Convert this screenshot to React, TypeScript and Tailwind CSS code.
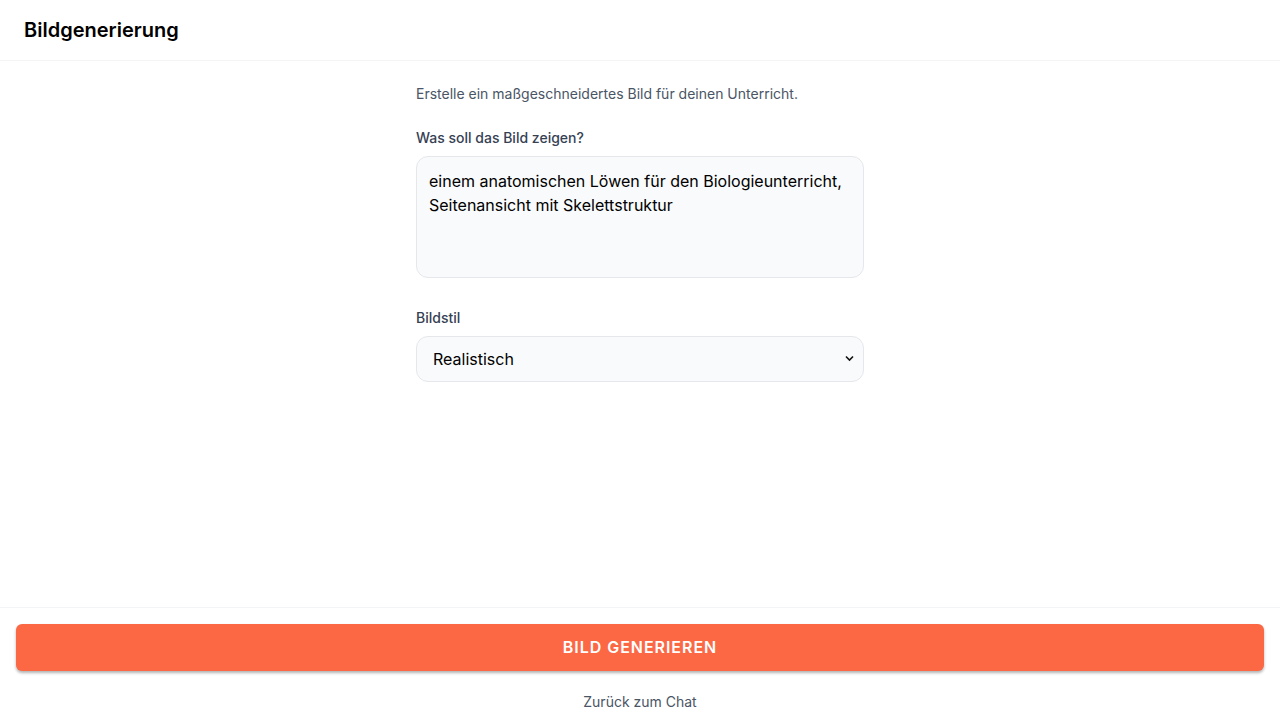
import React from "react";

export default function App() {
  return (
    <div
      className="flex h-[720px] w-[1280px] flex-col bg-white"
      style={{ fontFamily: "Inter, 'Noto Sans', sans-serif" }}
    >
      <header className="flex h-[61px] shrink-0 items-center border-b border-gray-100 px-6">
        <h1 className="text-xl font-semibold text-black">Bildgenerierung</h1>
      </header>
      <main className="flex-1 overflow-hidden">
        <div className="mx-auto w-[448px] pt-[23px]">
          <p className="text-sm leading-5 text-gray-600">
            Erstelle ein maßgeschneidertes Bild für deinen Unterricht.
          </p>
          <label className="mt-[24px] block text-sm font-medium leading-5 text-gray-700">
            Was soll das Bild zeigen?
          </label>
          <textarea
            className="mt-[8px] block h-[122px] w-full resize-none rounded-xl border border-gray-200 bg-gray-50 px-3 py-3 text-base leading-6 text-black outline-none"
            defaultValue="einem anatomischen Löwen für den Biologieunterricht, Seitenansicht mit Skelettstruktur"
          />
          <label className="mt-[30px] block text-sm font-medium leading-5 text-gray-700">
            Bildstil
          </label>
          <div className="relative mt-[8px]">
            <select
              className="block h-[46px] w-full appearance-none rounded-xl border border-gray-200 bg-gray-50 px-4 text-base text-black outline-none"
              defaultValue="Realistisch"
            >
              <option>Realistisch</option>
              <option>Comic</option>
              <option>Skizze</option>
            </select>
            <svg
              className="pointer-events-none absolute right-[10px] top-[19px]"
              width="9"
              height="7"
              viewBox="0 0 9 7"
            >
              <path d="M1 1.5 L4.5 5 L8 1.5" fill="none" stroke="#111" strokeWidth="1.6" />
            </svg>
          </div>
        </div>
      </main>
      <footer className="flex h-[113px] shrink-0 flex-col items-center border-t border-gray-100 px-4 pt-4">
        <button className="h-[47px] w-full rounded-md bg-[#fc6744] pb-[2px] text-base font-semibold uppercase tracking-[0.06em] text-white shadow-[0_2px_3px_rgba(0,0,0,0.3)]">
          Bild generieren
        </button>
        <a className="mt-[21px] text-sm text-gray-600" href="#">
          Zurück zum Chat
        </a>
      </footer>
    </div>
  );
}
